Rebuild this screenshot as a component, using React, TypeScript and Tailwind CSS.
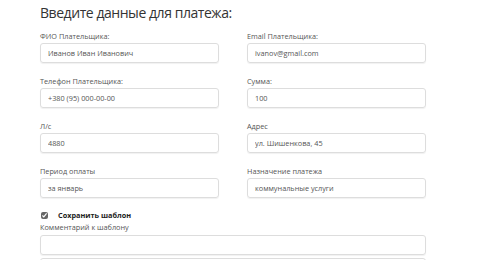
const fields = [
  { label: "ФИО Плательщика:", value: "Иванов Иван Иванович" },
  { label: "Email Плательщика:", value: "ivanov@gmail.com" },
  { label: "Телефон Плательщика:", value: "+380 (95) 000-00-00" },
  { label: "Сумма:", value: "100" },
  { label: "Л/с", value: "4880" },
  { label: "Адрес", value: "ул. Шишенкова, 45" },
  { label: "Период оплаты", value: "за январь" },
  { label: "Назначение платежа", value: "коммунальные услуги" },
];

function Field({ label, value }: { label: string; value: string }) {
  return (
    <div className="flex flex-col">
      <label className="text-[7.3px] leading-[9px] text-[#555] mb-[2px]">{label}</label>
      <input
        className="h-[20px] w-full rounded-[3px] border border-[#dddddd] px-[7px] text-[7.3px] text-[#555] shadow-[0_1px_1px_rgba(0,0,0,0.06)] outline-none"
        defaultValue={value}
      />
    </div>
  );
}

export default function App() {
  return (
    <div className="w-[500px] h-[260px] overflow-hidden bg-white font-['Open_Sans',sans-serif]">
      <div className="pl-[40px] pt-[5px] w-[426px]">
        <h2 className="text-[14px] leading-[16px] text-[#333] font-medium tracking-[-0.45px]">
          Введите данные для платежа:
        </h2>
        <div className="grid grid-cols-2 gap-x-[28px] gap-y-[14px] mt-[11px]">
          {fields.map((f) => (
            <Field key={f.label} label={f.label} value={f.value} />
          ))}
        </div>
        <div className="flex items-center mt-[13px] h-[8px]">
          <input type="checkbox" defaultChecked className="w-[7px] h-[7px] m-0 ml-[1px] accent-[#666]" />
          <span className="ml-[10px] text-[7.3px] font-bold text-[#222] leading-[8px]">Сохранить шаблон</span>
        </div>
        <div className="text-[7.3px] text-[#555] mt-[4px] leading-[9px]">Комментарий к шаблону</div>
        <input className="block mt-[3px] h-[20px] w-full rounded-[3px] border border-[#dddddd] shadow-[0_1px_1px_rgba(0,0,0,0.06)] outline-none" />
        <input className="block mt-[3px] h-[20px] w-full rounded-[3px] border border-[#dddddd] outline-none" />
      </div>
    </div>
  );
}
